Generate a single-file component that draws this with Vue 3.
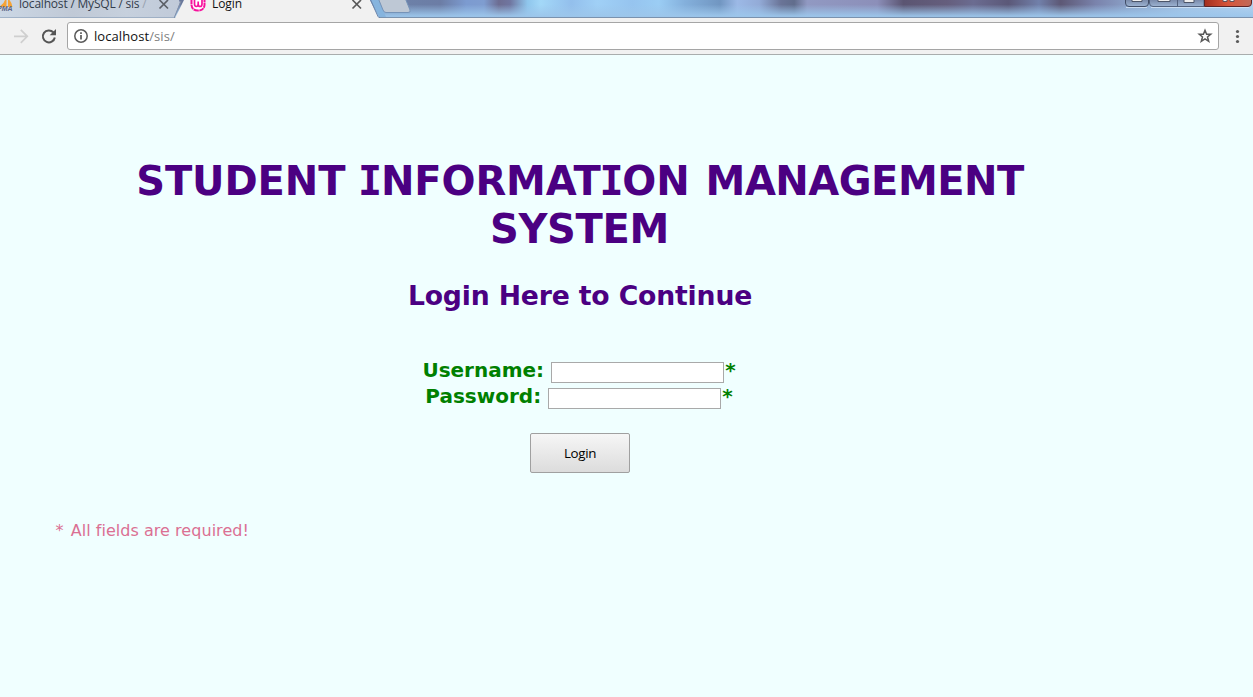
<script setup>
import { ref } from 'vue'
const username = ref('')
const password = ref('')
</script>

<template>
  <div class="window">
    <header class="tabs">
      <svg class="frame" width="1253" height="18" viewBox="0 0 1253 18" aria-hidden="true">
        <defs>
          <linearGradient id="glass" x1="379" x2="1253" y1="0" y2="0" gradientUnits="userSpaceOnUse">
            <stop offset="0" stop-color="#6d83aa" />
            <stop offset=".07" stop-color="#6c7da5" />
            <stop offset=".1" stop-color="#7c9bd0" />
            <stop offset=".12" stop-color="#7f9dd0" />
            <stop offset=".137" stop-color="#6d6d92" />
            <stop offset=".15" stop-color="#7076a0" />
            <stop offset=".17" stop-color="#8fc6ec" />
            <stop offset=".185" stop-color="#a3d8f8" />
            <stop offset=".22" stop-color="#93bfec" />
            <stop offset=".25" stop-color="#a0d0f6" />
            <stop offset=".29" stop-color="#96c4ef" />
            <stop offset=".32" stop-color="#9bcdf4" />
            <stop offset=".35" stop-color="#84b0dc" />
            <stop offset=".39" stop-color="#7196c1" />
            <stop offset=".41" stop-color="#9cb9e6" />
            <stop offset=".435" stop-color="#93abd7" />
            <stop offset=".46" stop-color="#6a7497" />
            <stop offset=".475" stop-color="#616d8c" />
            <stop offset=".49" stop-color="#9199c2" />
            <stop offset=".57" stop-color="#8c8fb9" />
            <stop offset=".6" stop-color="#5b5572" />
            <stop offset=".65" stop-color="#655e7d" />
            <stop offset=".68" stop-color="#6b6c91" />
            <stop offset=".72" stop-color="#5b5878" />
            <stop offset=".755" stop-color="#7180aa" />
            <stop offset=".78" stop-color="#5d5875" />
            <stop offset=".82" stop-color="#7a83ac" />
            <stop offset=".86" stop-color="#8ca3c9" />
            <stop offset=".92" stop-color="#a4c3e5" />
            <stop offset="1" stop-color="#b4d2ef" />
          </linearGradient>
          <linearGradient id="glow" x1="0" x2="0" y1="0" y2="1">
            <stop offset=".25" stop-color="#9cc6eb" stop-opacity="0" />
            <stop offset=".85" stop-color="#9cc6eb" stop-opacity=".9" />
            <stop offset="1" stop-color="#9cc4e8" />
          </linearGradient>
          <linearGradient id="idle" x1="0" x2="1" y1="0" y2="0">
            <stop offset="0" stop-color="#cbd7e5" />
            <stop offset=".4" stop-color="#c0c9d6" />
            <stop offset=".7" stop-color="#c6d0dd" />
            <stop offset="1" stop-color="#c0cad9" />
          </linearGradient>
          <linearGradient id="cap" x1="0" x2="0" y1="0" y2="1">
            <stop offset="0" stop-color="#7484a4" />
            <stop offset="1" stop-color="#9db4d3" />
          </linearGradient>
          <linearGradient id="close" x1="0" x2="1" y1="0" y2="0">
            <stop offset="0" stop-color="#a32e1e" />
            <stop offset=".5" stop-color="#d8553a" />
            <stop offset="1" stop-color="#c06a58" />
          </linearGradient>
        </defs>
        <rect width="1253" height="18" fill="url(#glass)" />
        <rect width="1253" height="18" fill="url(#glow)" />
        <path d="M0 17.500H1253" stroke="#7a92ae" />
        <path d="M0 0H181L174 17.500H0Z" fill="url(#idle)" />
        <path d="M179 0H184L181 6Z" fill="#69779a" />
        <path d="M181 1L174.500 17" stroke="#8490a8" fill="none" />
        <path d="M184 0L175 18H379L370 0Z" fill="#f1f1f1" />
        <path d="M371 0H379L386 17H379Z" fill="#86b4de" />
        <path d="M370.500 0L378 16.500Q378.500 17.500 380 17.500" stroke="#6b86ac" fill="none" />
        <path d="M378.500-1L383 10Q384 12.500 386 12.500H408Q411 12.500 410 10L405.500-1Z" fill="#bec8d5" stroke="#7593b8" />
        <g>
          <path d="M1125.500-1V3Q1125.500 6.500 1129 6.500H1145Q1148.500 6.500 1148.500 3V-1Z" fill="url(#cap)" stroke="#424e67" />
          <path d="M1149.500-1V3Q1149.500 6.500 1153 6.500H1204V-1Z" fill="url(#cap)" stroke="#53637f" />
          <path d="M1204.500-1V6.500H1248Q1251.500 6.500 1251.500 3V-1Z" fill="url(#close)" stroke="#5e2325" />
          <path d="M1177.500 0V6" stroke="#53637f" />
          <path d="M1126 7.500H1147M1151 7.500H1249" stroke="#d6e5f5" stroke-opacity=".8" />
          <path d="M1132-1H1142V1.500H1132ZM1158-1H1170V1.500H1158ZM1184-1H1194V2.500H1184Z" fill="#eee" stroke="#4c5568" />
          <path d="M1223-1H1227V1.500H1223ZM1230-1H1234V1.500H1230Z" fill="#eee" stroke="#655058" />
        </g>
        <g fill="#f6a336">
          <path d="M-1 7Q4 4 5 0H6.500V7Z" />
          <path d="M8 0H9.500Q12 3 12.500 7H8Z" />
        </g>
        <path d="M159.500 0L168 8.500M168 0L159.500 8.500" stroke="#5c6067" stroke-width="1.700" />
        <path d="M352.500 0L361 8.500M361 0L352.500 8.500" stroke="#5a5a5a" stroke-width="1.700" />
        <path d="M191.500-1V5Q192 10.500 198 10.500T204.500 5V-1" fill="#fff" stroke="#f7109c" stroke-width="2" stroke-dasharray="5 .5" />
        <path d="M194.500 0V4Q194.500 6.500 196.300 6.500T198.200 4V1.500M198.200 4Q198.200 6.500 200.100 6.500T202 4V0" stroke="#f7109c" stroke-width="1.700" fill="none" />
      </svg>
      <span class="pma">PMA</span>
      <span class="tab idle-tab">localhost / MySQL / sis <i>/</i></span>
      <span class="tab active-tab">Login</span>
    </header>

    <nav class="toolbar">
      <svg class="nav-icons" width="67" height="36" viewBox="0 18 67 36" fill="none" aria-hidden="true">
        <path d="M14 36.300H27M20.800 29.800L27.300 36.300L20.800 42.800" stroke="#cfcfcf" stroke-width="1.700" />
        <path d="M53.300 32.300A6 6 0 1 0 54.800 37.500" stroke="#555" stroke-width="2" />
        <path d="M56 29V35.300H49.700Z" fill="#555" />
      </svg>
      <div class="address">
        <svg class="info" width="16" height="16" viewBox="0 0 16 16" fill="none" aria-hidden="true">
          <circle cx="8" cy="8" r="6.200" stroke="#5a5a5a" stroke-width="1.500" />
          <path d="M8 7V11.500M8 4.300V5.900" stroke="#5a5a5a" stroke-width="1.700" />
        </svg>
        <span class="url">localhost<em>/sis/</em></span>
        <svg class="star" width="16" height="16" viewBox="0 0 16 16" fill="none" aria-hidden="true">
          <path d="M8 2.300L9.600 6.200H13.700L10.500 8.900L11.700 13.300L8 10.900L4.300 13.300L5.500 8.900L2.300 6.200H6.400Z" stroke="#5a5a5a" stroke-width="1.500" />
        </svg>
      </div>
      <svg class="menu" width="34" height="36" viewBox="1219 18 34 36" fill="#5a5a5a" aria-hidden="true">
        <circle cx="1237.500" cy="31.500" r="1.600" />
        <circle cx="1237.500" cy="36.500" r="1.600" />
        <circle cx="1237.500" cy="41.500" r="1.600" />
      </svg>
    </nav>

    <main class="page">
      <h1>
        <span class="student">STUDENT</span> <span class="information"><i>I</i>NFORMAT<i>I</i>ON</span> <span class="management">MANAGEMENT</span><br />
        <span class="system">SYSTEM</span>
      </h1>
      <h2>Login Here to Continue</h2>
      <form @submit.prevent>
        <div class="field">
          <label for="username">Username:</label>
          <input id="username" v-model="username" type="text" /><b>*</b>
        </div>
        <div class="field">
          <label for="password">Password:</label>
          <input id="password" v-model="password" type="password" /><b>*</b>
        </div>
        <button type="submit">Login</button>
      </form>
      <p class="note"><span>*</span> All fields are required!</p>
    </main>
  </div>
</template>

<style>
body {
  margin: 0;
  overflow: hidden;
}
</style>

<style scoped>
.window {
  width: 1253px;
  height: 697px;
  display: flex;
  flex-direction: column;
  overflow: hidden;
  background: #f0ffff;
  font-family: "DejaVu Sans", sans-serif;
}
.tabs {
  position: relative;
  height: 18px;
  flex: none;
  display: flex;
}
.frame {
  position: absolute;
  inset: 0;
}
.tab {
  position: relative;
  margin-top: -5px;
  font: 12px/18px "Open Sans", sans-serif;
  color: #333d4c;
  white-space: nowrap;
}
.pma {
  position: relative;
  width: 19px;
  margin-top: 4px;
  text-indent: -3px;
  font: italic bold 7px/9px "Liberation Sans", sans-serif;
  color: #5b6384;
}
.idle-tab {
  width: 193px;
  letter-spacing: -0.2px;
}
.idle-tab i {
  font-style: normal;
  color: #98a2b0;
}
.active-tab {
  color: #111;
  letter-spacing: -0.1px;
}
.toolbar {
  box-sizing: border-box;
  height: 37px;
  flex: none;
  display: flex;
  background: #f1f1f1;
  border-bottom: 1px solid #a9adad;
}
.address {
  box-sizing: border-box;
  width: 1152px;
  height: 28px;
  margin-top: 4px;
  display: flex;
  align-items: center;
  padding: 0 5px;
  background: #fff;
  border: 1px solid #a5a5a5;
  border-radius: 3px;
}
.url {
  margin-left: 5px;
  flex: 1;
  font: 13px/20px "Open Sans", sans-serif;
  letter-spacing: 0.08px;
  color: #111;
}
.url em {
  font-style: normal;
  color: #808080;
}
.page {
  flex: 1;
  padding: 102px 93px 0 0;
  text-align: center;
}
h1 {
  margin: 0;
  font-size: 40px;
  line-height: 48px;
  color: #4b0082;
  white-space: nowrap;
}
h1 i {
  margin: 0 -1.2px;
  font-family: "DejaVu Sans Mono", monospace;
  font-style: normal;
  line-height: 1;
}
.student {
  letter-spacing: -0.1px;
}
.information {
  letter-spacing: -0.1px;
}
.management {
  margin-left: 2px;
  letter-spacing: -0.5px;
}
.system {
  margin-right: 1px;
  letter-spacing: -0.35px;
}
h2 {
  margin: 27px 0 0;
  font-size: 26.67px;
  line-height: 32px;
  letter-spacing: -0.16px;
  color: #4b0082;
}
form {
  margin-top: 45px;
}
.field {
  display: flex;
  justify-content: center;
  height: 26px;
  margin-right: 2px;
  font-size: 20px;
  font-weight: bold;
  line-height: 26px;
  color: #008000;
}
.field input {
  box-sizing: border-box;
  width: 173px;
  height: 21px;
  margin: 5px 1px 0 7px;
  padding: 1px;
  background: #fff;
  border: 1px solid #a9a9a9;
}
button {
  display: block;
  width: 100px;
  height: 40px;
  margin: 24px auto 0;
  padding: 0;
  border: 1px solid #a0a0a0;
  border-radius: 2px;
  background: linear-gradient(#f6f6f6, #dcdcdc);
  color: #000;
  font: 13.33px "Open Sans", sans-serif;
  letter-spacing: -0.3px;
}
.note {
  margin: 48px 0 0 55.5px;
  text-align: left;
  font-size: 16px;
  line-height: 20px;
  font-variant-ligatures: none;
  letter-spacing: 0.04px;
  color: #db7093;
}
.note span {
  margin-right: 2px;
}
</style>
